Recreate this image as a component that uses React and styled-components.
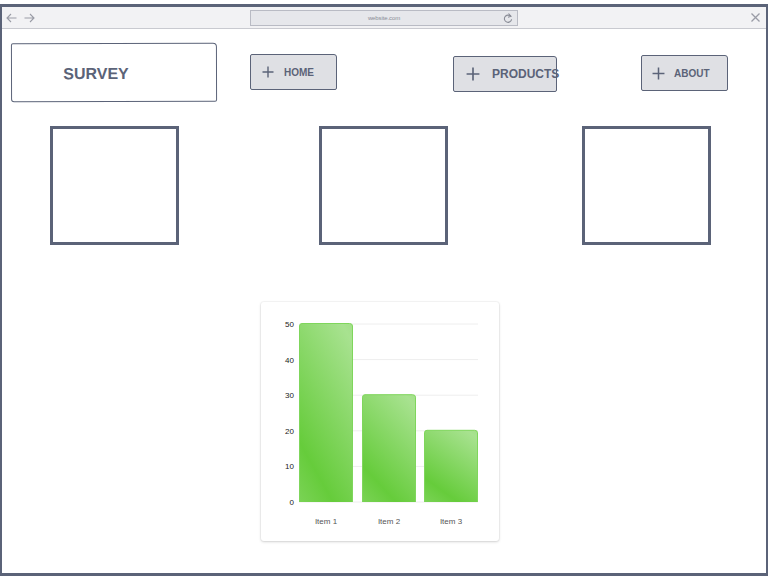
import React from "react";
import styled, { createGlobalStyle } from "styled-components";

const GlobalStyle = createGlobalStyle`
  html, body {
    margin: 0;
    padding: 0;
    background: #ffffff;
  }
  body {
    font-family: "Liberation Sans", Arial, sans-serif;
  }
`;

const ink = "#5b6378";

const Window = styled.div`
  box-sizing: border-box;
  width: 768px;
  height: 572px;
  margin-top: 4px;
  border: 2px solid ${ink};
  border-top-width: 3px;
  border-bottom-width: 3px;
  background: #ffffff;
  display: flex;
  flex-direction: column;
  overflow: hidden;
`;

const BrowserBar = styled.div`
  display: grid;
  grid-template-columns: 248px 268px 1fr;
  align-items: center;
  height: 21px;
  background: #f2f2f4;
  border-bottom: 1px solid #c9cad0;
`;

const NavGroup = styled.div`
  display: flex;
  align-items: center;
  gap: 7px;
  padding-left: 4px;
  color: #9a9ca6;
`;

const UrlBar = styled.div`
  position: relative;
  box-sizing: border-box;
  height: 16px;
  display: flex;
  align-items: center;
  justify-content: center;
  background: #e6e7eb;
  border: 1px solid #b9bbc4;
  font-size: 6px;
  color: #8a8d97;
  letter-spacing: -0.1px;
`;

const Reload = styled.svg`
  position: absolute;
  right: 4px;
  top: 2px;
`;

const CloseWrap = styled.div`
  display: flex;
  justify-content: flex-end;
  padding-right: 6px;
  color: #9a9ca6;
`;

const Page = styled.div`
  flex: 1;
  display: flex;
  flex-direction: column;
`;

const Header = styled.div`
  display: flex;
  align-items: flex-start;
  margin-top: 14px;
  padding-left: 9px;
`;

const Brand = styled.div`
  box-sizing: border-box;
  width: 206px;
  height: 59px;
  display: flex;
  align-items: center;
  justify-content: center;
  padding: 3px 36px 0 0;
  border: 1.5px solid ${ink};
  border-radius: 2px 4px 2px 3px;
  transform: rotate(-0.15deg);
  color: ${ink};
  font-weight: 700;
  font-size: 16px;
`;

const NavButton = styled.div`
  box-sizing: border-box;
  flex-shrink: 0;
  margin-left: ${(p) => p.$left}px;
  margin-top: ${(p) => p.$top}px;
  width: ${(p) => p.$width}px;
  height: 36px;
  display: flex;
  align-items: center;
  gap: ${(p) => p.$gap}px;
  padding-left: ${(p) => p.$pad}px;
  background: #dfe0e4;
  border: 1.5px solid ${ink};
  border-radius: 2px 3px 2px 2px;
  color: ${ink};
  font-weight: 700;
  font-size: ${(p) => p.$size}px;
  white-space: nowrap;
  overflow: visible;

  svg {
    flex-shrink: 0;
  }
`;

const Tiles = styled.div`
  display: flex;
  margin-top: 24px;
`;

const Tile = styled.div`
  box-sizing: border-box;
  margin-left: ${(p) => p.$left}px;
  width: 129px;
  height: 119px;
  border: 3px solid ${ink};
`;

const ChartCard = styled.div`
  margin-top: 57px;
  margin-left: 259px;
  width: 238px;
  height: 239px;
  background: #ffffff;
  border-radius: 3px;
  box-shadow: 0 1px 3px rgba(0, 0, 0, 0.16), 0 0 0 1px rgba(0, 0, 0, 0.03);
`;

function Plus({ size }) {
  return (
    <svg width={size} height={size} viewBox="0 0 12 12">
      <path d="M6 0.5V11.5M0.5 6H11.5" stroke={ink} strokeWidth="1.4" fill="none" />
    </svg>
  );
}

const bars = [
  { label: "Item 1", value: 50, x: 38 },
  { label: "Item 2", value: 30, x: 101 },
  { label: "Item 3", value: 20, x: 163 },
];

function BarChart() {
  const base = 200;
  const top = 22;
  const step = (base - top) / 5;
  const ticks = [0, 10, 20, 30, 40, 50];
  return (
    <svg width="238" height="239" viewBox="0 0 238 239">
      <defs>
        <linearGradient id="barFill" x1="0.8" y1="0" x2="0.35" y2="0.85" spreadMethod="reflect">
          <stop offset="0" stopColor="#a8e290" />
          <stop offset="1" stopColor="#66cc3b" />
        </linearGradient>
      </defs>
      {ticks.map((t, i) => (
        <g key={t}>
          <line
            x1="38"
            x2="217"
            y1={base - i * step}
            y2={base - i * step}
            stroke="#eeeeee"
            strokeWidth="1"
          />
          <text
            x="33"
            y={base - i * step + 3}
            textAnchor="end"
            fontSize="8"
            fill="#222"
            fontFamily="Liberation Sans, Arial, sans-serif"
          >
            {t}
          </text>
        </g>
      ))}
      {bars.map((b) => {
        const h = (b.value / 50) * (base - top) + 1;
        const y = base - h;
        return (
          <g key={b.label}>
            <path
              d={`M${b.x + 0.5} ${base} V${y + 3} Q${b.x + 0.5} ${y + 0.5} ${b.x + 3} ${y + 0.5} H${b.x + 50.5} Q${b.x + 53.5} ${y + 0.5} ${b.x + 53.5} ${y + 3} V${base}`}
              fill="url(#barFill)"
              stroke="#7fd65c"
              strokeWidth="1"
            />
            <text
              x={b.x + 27}
              y="222"
              textAnchor="middle"
              fontSize="8"
              fill="#555"
              fontFamily="Liberation Sans, Arial, sans-serif"
            >
              {b.label}
            </text>
          </g>
        );
      })}
    </svg>
  );
}

export default function App() {
  return (
    <>
      <GlobalStyle />
      <Window>
        <BrowserBar>
          <NavGroup>
            <svg width="11" height="10" viewBox="0 0 11 10">
              <path d="M10.5 5H1M5 1L1 5L5 9" stroke="currentColor" strokeWidth="1.1" fill="none" />
            </svg>
            <svg width="11" height="10" viewBox="0 0 11 10">
              <path d="M0.5 5H10M6 1L10 5L6 9" stroke="currentColor" strokeWidth="1.1" fill="none" />
            </svg>
          </NavGroup>
          <UrlBar>
            website.com
            <Reload width="10" height="11" viewBox="0 0 10 11">
              <path
                d="M7.6 3.2A3.6 3.6 0 1 0 8.6 6.2"
                stroke="#8a8d97"
                strokeWidth="1.1"
                fill="none"
              />
              <path d="M5.5 0.5L8 3.3L5 4.2" stroke="#8a8d97" strokeWidth="1.1" fill="none" />
            </Reload>
          </UrlBar>
          <CloseWrap>
            <svg width="9" height="9" viewBox="0 0 9 9">
              <path d="M0.5 0.5L8.5 8.5M8.5 0.5L0.5 8.5" stroke="currentColor" strokeWidth="1.3" />
            </svg>
          </CloseWrap>
        </BrowserBar>
        <Page>
          <Header>
            <Brand>SURVEY</Brand>
            <NavButton $left={33} $top={11} $width={87} $pad={11} $gap={10} $size={10}>
              <Plus size={12} />
              HOME
            </NavButton>
            <NavButton $left={116} $top={13} $width={104} $pad={12} $gap={12} $size={12}>
              <Plus size={14} />
              PRODUCTS
            </NavButton>
            <NavButton $left={84} $top={12} $width={87} $pad={10} $gap={9} $size={10}>
              <Plus size={13} />
              ABOUT
            </NavButton>
          </Header>
          <Tiles>
            <Tile $left={48} />
            <Tile $left={140} />
            <Tile $left={134} />
          </Tiles>
          <ChartCard>
            <BarChart />
          </ChartCard>
        </Page>
      </Window>
    </>
  );
}
